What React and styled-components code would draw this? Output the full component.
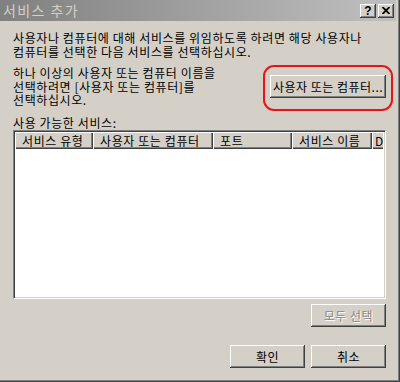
import React from 'react';
import styled, { createGlobalStyle } from 'styled-components';

const Global = createGlobalStyle`
  html, body { margin: 0; padding: 0; background: #d4d0c8; }
  body {
    font-family: "Noto Sans CJK KR", "Noto Sans", sans-serif;
    font-size: 12px;
    color: #000;
  }
`;

const FONT = `"Noto Sans CJK KR", "Noto Sans", sans-serif`;

const Window = styled.div`
  width: 400px;
  height: 382px;
  box-sizing: border-box;
  display: flex;
  flex-direction: column;
  background: #d4d0c8;
  border-right: 1px solid #404040;
  border-bottom: 1px solid #404040;
  box-shadow: inset -1px -1px #808080;
  padding: 0 3px 3px 0;
`;

const TitleBar = styled.div`
  height: 21px;
  flex: none;
  display: flex;
  align-items: center;
  padding: 0 2px 0 3px;
  background: linear-gradient(to right, #808080, #c0c0c0);
`;

const Title = styled.span`
  font-family: ${FONT};
  font-size: 14px;
  color: #d4d0c8;
  line-height: 21px;
  letter-spacing: 1.4px;
`;

const Controls = styled.div`
  margin-left: auto;
  display: flex;
  gap: 2px;
`;

const CapButton = styled.div`
  width: 16px;
  height: 14px;
  box-sizing: border-box;
  background: #d4d0c8;
  box-shadow: inset -1px -1px #404040, inset 1px 1px #fff, inset -2px -2px #808080;
  display: flex;
  align-items: center;
  justify-content: center;
  font-family: "Liberation Sans", sans-serif;
  font-weight: bold;
  font-size: 12px;
  line-height: 12px;
  color: #000;
`;

const Body = styled.div`
  flex: 1;
  display: flex;
  flex-direction: column;
  padding: 10px 10px 10px 13px;
`;

const Text = styled.p`
  margin: ${p => p.$mt || 0}px 0 0 0;
  font-family: ${FONT};
  font-size: 12px;
  line-height: 13.5px;
  letter-spacing: 0.6px;
  white-space: nowrap;
`;

const Row = styled.div`
  margin-top: 8px;
  display: flex;
  align-items: center;
  justify-content: space-between;
`;

const Anchor = styled.div`
  position: relative;
  display: flex;
`;

const Highlight = styled.div`
  position: absolute;
  top: -10px;
  bottom: -13px;
  left: -7px;
  right: -7px;
  border: 2px solid #e8141b;
  border-radius: 11px;
  pointer-events: none;
`;

const Button = styled.button`
  width: ${p => p.$w || 75}px;
  height: 23px;
  padding: 0;
  margin: 0;
  border: none;
  background: #d4d0c8;
  box-shadow: inset -1px -1px #404040, inset 1px 1px #fff, inset -2px -2px #808080;
  font-family: ${FONT};
  font-size: 12px;
  line-height: 23px;
  color: ${p => (p.disabled ? '#8a8782' : '#000')};
  text-shadow: ${p => (p.disabled ? '1px 1px #fff' : 'none')};
  letter-spacing: 0.5px;
`;

const ListBox = styled.div`
  margin-top: 1px;
  height: 169px;
  box-sizing: border-box;
  background: #fff;
  border-top: 1px solid #808080;
  border-left: 1px solid #808080;
  border-right: 1px solid #fff;
  border-bottom: 1px solid #fff;
  box-shadow: inset 1px 1px #404040, inset -1px -1px #d4d0c8;
  padding: 1px 2px 0 1px;
  overflow: hidden;
`;

const Header = styled.div`
  display: flex;
  height: 17px;
  overflow: hidden;
`;

const HeaderCell = styled.div`
  flex: none;
  width: ${p => p.$w}px;
  height: 17px;
  box-sizing: border-box;
  background: #d4d0c8;
  box-shadow: inset 1px 1px #fff, inset -1px -1px #404040, inset -2px -2px #808080;
  padding-left: ${p => p.$pl || 7}px;
  font-family: ${FONT};
  font-size: 12px;
  line-height: 17px;
  letter-spacing: 0.6px;
  white-space: nowrap;
  overflow: hidden;
`;

const SelectRow = styled.div`
  margin-top: 5px;
  display: flex;
  justify-content: flex-end;
`;

const Footer = styled.div`
  margin-top: auto;
  display: flex;
  justify-content: flex-end;
  gap: 6px;
`;

const columns = [
  { label: '서비스 유형', w: 78 },
  { label: '사용자 또는 컴퓨터', w: 120 },
  { label: '포트', w: 79 },
  { label: '서비스 이름', w: 80 },
  { label: 'D', w: 60, pl: 3 },
];

export default function App() {
  return (
    <>
      <Global />
      <Window>
        <TitleBar>
          <Title>서비스 추가</Title>
          <Controls>
            <CapButton>?</CapButton>
            <CapButton>
              <svg width="8" height="7" viewBox="0 0 8 7">
                <path d="M0.5 0 L7.5 7 M7.5 0 L0.5 7" stroke="#000" strokeWidth="1.8" />
              </svg>
            </CapButton>
          </Controls>
        </TitleBar>
        <Body>
          <Text>
            사용자나 컴퓨터에 대해 서비스를 위임하도록 하려면 해당 사용자나
            <br />
            컴퓨터를 선택한 다음 서비스를 선택하십시오.
          </Text>
          <Row>
            <Text>
              하나 이상의 사용자 또는 컴퓨터 이름을
              <br />
              선택하려면 [사용자 또는 컴퓨터]를
              <br />
              선택하십시오.
            </Text>
            <Anchor>
              <Button $w={116}>사용자 또는 컴퓨터...</Button>
              <Highlight />
            </Anchor>
          </Row>
          <Text $mt={9}>사용 가능한 서비스:</Text>
          <ListBox>
            <Header>
              {columns.map(c => (
                <HeaderCell key={c.label} $w={c.w} $pl={c.pl}>
                  {c.label}
                </HeaderCell>
              ))}
            </Header>
          </ListBox>
          <SelectRow>
            <Button disabled>모두 선택</Button>
          </SelectRow>
          <Footer>
            <Button>확인</Button>
            <Button>취소</Button>
          </Footer>
        </Body>
      </Window>
    </>
  );
}
